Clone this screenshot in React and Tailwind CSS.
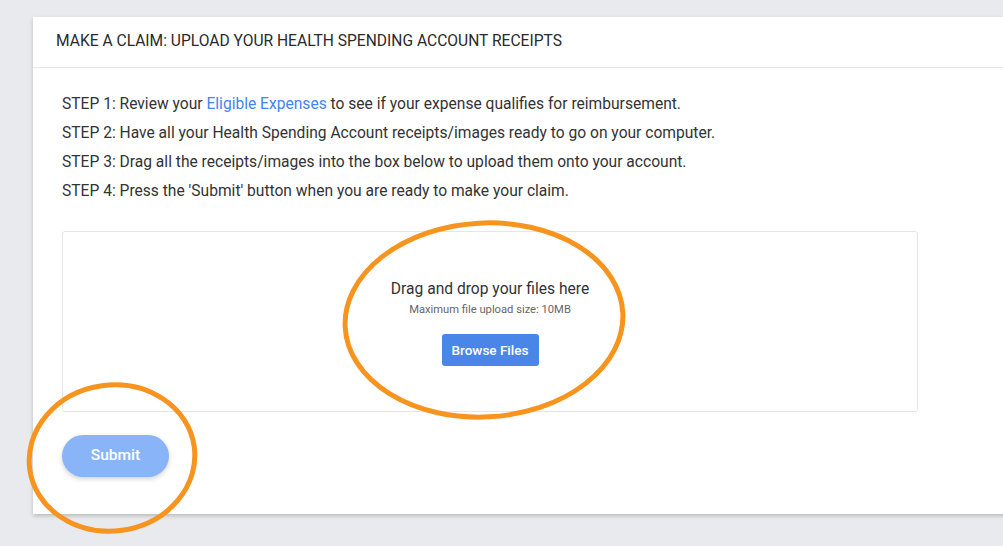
import React from "react";

const steps = [
  <>
    STEP 1: Review your <a className="text-[#4285f4]">Eligible Expenses</a> to see if your expense qualifies for reimbursement.
  </>,
  <>STEP 2: Have all your Health Spending Account receipts/images ready to go on your computer.</>,
  <>STEP 3: Drag all the receipts/images into the box below to upload them onto your account.</>,
  <>STEP 4: Press the 'Submit' button when you are ready to make your claim.</>,
];

export default function App() {
  return (
    <div className="relative w-full h-[546px] overflow-hidden bg-[#e8eaed] font-['Roboto',sans-serif] text-[#333]">
      {/* card */}
      <div className="ml-[33px] mt-[17px] w-[1020px] bg-white shadow-[0_2px_4px_rgba(0,0,0,0.2)]">
        <div className="h-[51px] flex items-center pl-[23px] border-b border-[#e3e5e8]">
          <h2 className="text-[15.6px] text-[#2a2a2a]">MAKE A CLAIM: UPLOAD YOUR HEALTH SPENDING ACCOUNT RECEIPTS</h2>
        </div>

        <div className="pl-[29px] pt-[22px] pb-[37px]">
          <div className="text-[15.6px] leading-[29px]">
            {steps.map((s, i) => (
              <p key={i}>{s}</p>
            ))}
          </div>

          {/* drop zone */}
          <div className="mt-[25px] w-[856px] h-[181px] border border-[#e6e6e6] rounded-[3px] flex flex-col items-center pt-[48px]">
            <p className="text-[15.6px] leading-[18px]">Drag and drop your files here</p>
            <p className="text-[11.2px] leading-[14px] text-[#666] mt-[5px]">Maximum file upload size: 10MB</p>
            <button className="mt-[17px] w-[97px] h-[32px] rounded-[3px] bg-[#4a86e8] text-white text-[13.5px] font-medium">
              Browse Files
            </button>
          </div>

          <button className="mt-[23px] w-[107px] h-[42px] rounded-full bg-[#8ab4f8] text-white text-[15.5px] font-medium shadow-[0_2px_5px_rgba(0,0,0,0.18)]">
            Submit
          </button>
        </div>
      </div>

      {/* annotation rings */}
      <svg className="absolute inset-0 pointer-events-none" width="1003" height="546" viewBox="0 0 1003 546">
        <ellipse cx="484" cy="320" rx="139" ry="97" fill="none" stroke="#f7941d" strokeWidth="5" transform="rotate(-3 484 320)" />
        <ellipse cx="112" cy="458" rx="83" ry="73" fill="none" stroke="#f7941d" strokeWidth="5" transform="rotate(-8 112 458)" />
      </svg>
    </div>
  );
}
